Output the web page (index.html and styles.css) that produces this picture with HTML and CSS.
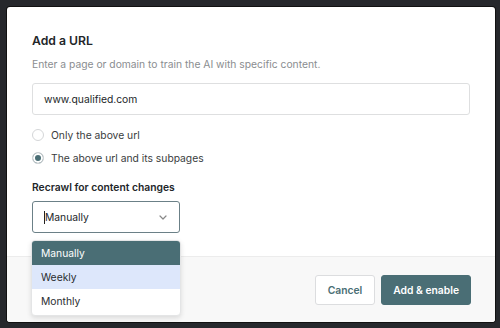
FILE: index.html
```html
<!DOCTYPE html>
<html lang="en">
<head>
    <meta charset="UTF-8">
    <meta name="viewport" content="width=device-width, initial-scale=1.0">
    <title>Add a URL</title>
    <link rel="stylesheet" href="styles.css">
</head>
<body>
    <div class="modal">
        <div class="modal-body">
            <h1>Add a URL</h1>
            <p class="hint">Enter a page or domain to train the AI with specific content.</p>

            <div class="text-input">www.qualified.com</div>

            <div class="radios">
                <label class="radio"><span class="dot"></span>Only the above url</label>
                <label class="radio"><span class="dot checked"></span>The above url and its subpages</label>
            </div>

            <div class="field-label">Recrawl for content changes</div>
            <div class="select-wrap">
                <div class="select">
                    <span class="caret"></span>Manually
                    <svg class="chevron" width="8" height="5" viewBox="0 0 8 5"><path d="M1 1l3 3 3-3" fill="none" stroke="#888" stroke-width="1.2" stroke-linecap="round" stroke-linejoin="round"/></svg>
                </div>
                <ul class="menu">
                    <li class="active">Manually</li>
                    <li class="hover">Weekly</li>
                    <li>Monthly</li>
                </ul>
            </div>
        </div>
        <div class="modal-footer">
            <button class="btn">Cancel</button>
            <button class="btn primary">Add &amp; enable</button>
        </div>
    </div>
</body>
</html>
```

FILE: styles.css
```css
body {
    margin: 0;
    padding: 7px 5px 6px 7px;
    background-color: #26282c;
    font-family: Inter, 'Noto Sans', sans-serif;
    color: #222629;
}
.modal {
    width: 488px;
    height: 315px;
    background-color: white;
    border-radius: 3px;
    box-shadow: 0 0 0 1px #111;
    display: flex;
    flex-direction: column;
}
.modal-body {
    flex: 1;
    padding: 26px 25px 0 25px;
}
h1 {
    margin: 0;
    font-size: 12.2px;
    font-weight: 600;
    line-height: 16px;
}
.hint {
    margin: 8px 0 0;
    font-size: 10.3px;
    line-height: 14px;
    color: #8a8d90;
}
.text-input {
    margin-top: 12px;
    height: 30px;
    border: 1px solid #dedfe0;
    border-radius: 3px;
    padding: 0 11px;
    font-size: 10.3px;
    line-height: 30px;
}
.radios {
    margin-top: 13px;
    display: flex;
    flex-direction: column;
    gap: 9px;
}
.radio {
    display: flex;
    align-items: center;
    gap: 7px;
    font-size: 10.3px;
    line-height: 14px;
    color: #3a3d40;
}
.dot {
    width: 10px;
    height: 10px;
    border: 1px solid #d4d6d8;
    border-radius: 50%;
}
.dot.checked {
    background-color: #4a6e75;
    box-shadow: inset 0 0 0 2px white;
}
.field-label {
    margin-top: 15px;
    font-size: 10.3px;
    font-weight: 600;
    line-height: 14px;
}
.select-wrap {
    position: relative;
    margin-top: 7px;
    width: 148px;
}
.select {
    height: 30px;
    border: 1px solid #6b8087;
    border-radius: 3px;
    padding: 0 11px;
    font-size: 10.3px;
    line-height: 30px;
    display: flex;
    align-items: center;
}
.caret {
    width: 1px;
    height: 13px;
    background-color: #222;
}
.chevron {
    margin-left: auto;
    margin-right: 1px;
}
.menu {
    position: absolute;
    top: 39px;
    left: -1px;
    width: 148px;
    margin: 0;
    padding: 0 0 2px;
    list-style: none;
    background-color: white;
    border: 1px solid #e4e5e6;
    border-radius: 4px;
    overflow: hidden;
    box-shadow: 0 2px 5px rgba(0, 0, 0, 0.12);
    font-size: 10.3px;
    z-index: 2;
}
.menu li {
    height: 24px;
    line-height: 24px;
    padding: 0 9px;
    color: #2a2d30;
}
.menu li.active {
    background-color: #4a6e75;
    color: white;
}
.menu li.hover {
    background-color: #dde7fb;
}
.modal-footer {
    height: 65px;
    border-top: 1px solid #ececec;
    background-color: #f8f8f8;
    border-radius: 0 0 3px 3px;
    display: flex;
    align-items: center;
    justify-content: flex-end;
    gap: 6px;
    padding: 0 24px;
}
.btn {
    height: 30px;
    padding: 0 12px;
    border: 1px solid #dcdddf;
    border-radius: 3px;
    background-color: white;
    color: #4a6e75;
    font-family: Inter, 'Noto Sans', sans-serif;
    font-size: 10.3px;
    font-weight: 600;
}
.btn.primary {
    padding: 0 11px;
    border-color: #4a6e75;
    background-color: #4a6e75;
    color: white;
}
```
